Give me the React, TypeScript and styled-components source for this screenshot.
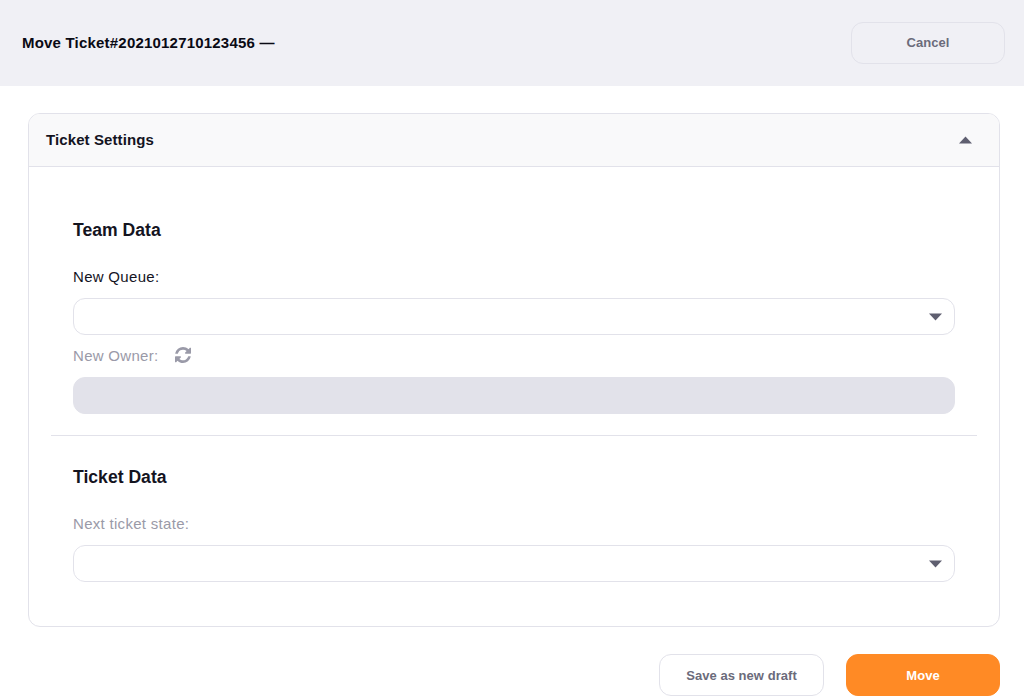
import React from "react";
import styled, { createGlobalStyle } from "styled-components";

const Global = createGlobalStyle`
  html, body { margin: 0; padding: 0; background: #fff; overflow: hidden; }
  body { font-family: "Liberation Sans", Arial, sans-serif; }
`;

const Page = styled.div`
  width: 1024px;
  height: 700px;
  display: flex;
  flex-direction: column;
  overflow: hidden;
`;

const TopBar = styled.header`
  height: 86px;
  flex: none;
  box-sizing: border-box;
  background: #f0f0f5;
  display: flex;
  align-items: center;
  justify-content: space-between;
  padding: 0 19px 0 22px;
`;

const Title = styled.h1`
  margin: 0;
  font-size: 15px;
  line-height: 18px;
  font-weight: 700;
  letter-spacing: 0.2px;
  color: #0a0a14;
`;

const Button = styled.button<{ $variant: "ghost" | "outline" | "primary"; $width: number }>`
  box-sizing: border-box;
  width: ${(p) => p.$width}px;
  height: 42px;
  padding: 0 0 ${(p) => (p.$variant === "ghost" ? "2px" : "0")};
  border-radius: 12px;
  font-family: inherit;
  font-size: 13px;
  font-weight: 700;
  letter-spacing: 0.05px;
  border: 1px solid ${(p) => (p.$variant === "primary" ? "#ff8a25" : "#e2e2ea")};
  background: ${(p) => (p.$variant === "primary" ? "#ff8a25" : p.$variant === "ghost" ? "transparent" : "#fff")};
  color: ${(p) => (p.$variant === "primary" ? "#fff" : "#6b6b7b")};
`;

const Content = styled.main`
  flex: none;
  padding: 27px 24px 0 28px;
`;

const Card = styled.section`
  box-sizing: border-box;
  height: 514px;
  border: 1px solid #e2e2ea;
  border-radius: 12px;
  overflow: hidden;
`;

const CardHeader = styled.div`
  box-sizing: border-box;
  height: 53px;
  background: #f9f9fa;
  border-bottom: 1px solid #e2e2ea;
  display: flex;
  align-items: center;
  justify-content: space-between;
  padding: 0 27px 0 17px;
`;

const CardTitle = styled.h2`
  margin: 0 0 1px;
  font-size: 15px;
  line-height: 18px;
  font-weight: 700;
  letter-spacing: 0.1px;
  color: #14141f;
`;

const Caret = styled.svg`
  display: block;
  width: 13px;
  height: 8px;
  fill: #5f5f70;
`;

const CardBody = styled.div`
  padding: 0 22px;
`;

const Section = styled.div<{ $divided?: boolean }>`
  padding: ${(p) => (p.$divided ? "31px 22px 0" : "53px 22px 21px")};
  border-bottom: ${(p) => (p.$divided ? "none" : "1px solid #e2e2ea")};
`;

const SectionTitle = styled.h3`
  margin: 0 0 26px;
  font-size: 17.6px;
  line-height: 21px;
  font-weight: 700;
  color: #14141f;
`;

const LabelRow = styled.div`
  display: flex;
  align-items: center;
  gap: 16px;
  height: 20px;
`;

const Label = styled.label<{ $muted?: boolean }>`
  font-size: 15px;
  line-height: 20px;
  letter-spacing: 0.3px;
  color: ${(p) => (p.$muted ? "#9a9aa8" : "#14141f")};
`;

const RefreshIcon = styled.svg`
  display: block;
  width: 16px;
  height: 16px;
  margin-top: -2px;
  fill: #9a9aa8;
`;

const Select = styled.div<{ $disabled?: boolean }>`
  box-sizing: border-box;
  height: 37px;
  margin-top: 11px;
  border-radius: 12px;
  border: 1px solid #e2e2ea;
  background: ${(p) => (p.$disabled ? "#e2e2ea" : "#fff")};
  display: flex;
  align-items: center;
  justify-content: flex-end;
  padding-right: 12px;
`;

const Field = styled.div<{ $tight?: boolean }>`
  margin-bottom: ${(p) => (p.$tight ? "11px" : "0")};
`;

const Footer = styled.footer`
  display: flex;
  justify-content: flex-end;
  gap: 22px;
  padding: 27px 24px 0 0;
`;

const Down = () => (
  <Caret viewBox="0 0 13 8" aria-hidden="true">
    <path d="M0 .5h13L6.5 7.5z" />
  </Caret>
);

const Up = () => (
  <Caret viewBox="0 0 13 8" aria-hidden="true">
    <path d="M0 7.5h13L6.5 .5z" />
  </Caret>
);

const Refresh = () => (
  <RefreshIcon viewBox="0 128 1536 1536" aria-hidden="true">
    <path d="M1511 1056q0 5-1 7-64 268-268 434.5t-478 166.5q-146 0-282.5-55t-243.5-157l-129 129q-19 19-45 19t-45-19-19-45v-448q0-26 19-45t45-19h448q26 0 45 19t19 45-19 45l-137 137q71 66 161 102t187 36q134 0 250-65t186-179q11-17 53-117 8-23 30-23h192q13 0 22.5 9.5t9.5 22.5zm25-800v448q0 26-19 45t-45 19h-448q-26 0-45-19t-19-45 19-45l138-138q-148-137-349-137-134 0-250 65t-186 179q-11 17-53 117-8 23-30 23h-199q-13 0-22.5-9.5t-9.5-22.5v-7q65-268 270-434.5t480-166.5q146 0 284 55.5t245 156.5l130-129q19-19 45-19t45 19 19 45z" />
  </RefreshIcon>
);

export default function App() {
  return (
    <Page>
      <Global />
      <TopBar>
        <Title>Move Ticket#2021012710123456 —</Title>
        <Button $variant="ghost" $width={154}>Cancel</Button>
      </TopBar>
      <Content>
        <Card>
          <CardHeader>
            <CardTitle>Ticket Settings</CardTitle>
            <Up />
          </CardHeader>
          <CardBody>
            <Section>
              <SectionTitle>Team Data</SectionTitle>
              <Field $tight>
                <LabelRow><Label>New Queue:</Label></LabelRow>
                <Select><Down /></Select>
              </Field>
              <Field>
                <LabelRow>
                  <Label $muted>New Owner:</Label>
                  <Refresh />
                </LabelRow>
                <Select $disabled />
              </Field>
            </Section>
            <Section $divided>
              <SectionTitle>Ticket Data</SectionTitle>
              <Field>
                <LabelRow><Label $muted>Next ticket state:</Label></LabelRow>
                <Select><Down /></Select>
              </Field>
            </Section>
          </CardBody>
        </Card>
      </Content>
      <Footer>
        <Button $variant="outline" $width={165}>Save as new draft</Button>
        <Button $variant="primary" $width={154}>Move</Button>
      </Footer>
    </Page>
  );
}
